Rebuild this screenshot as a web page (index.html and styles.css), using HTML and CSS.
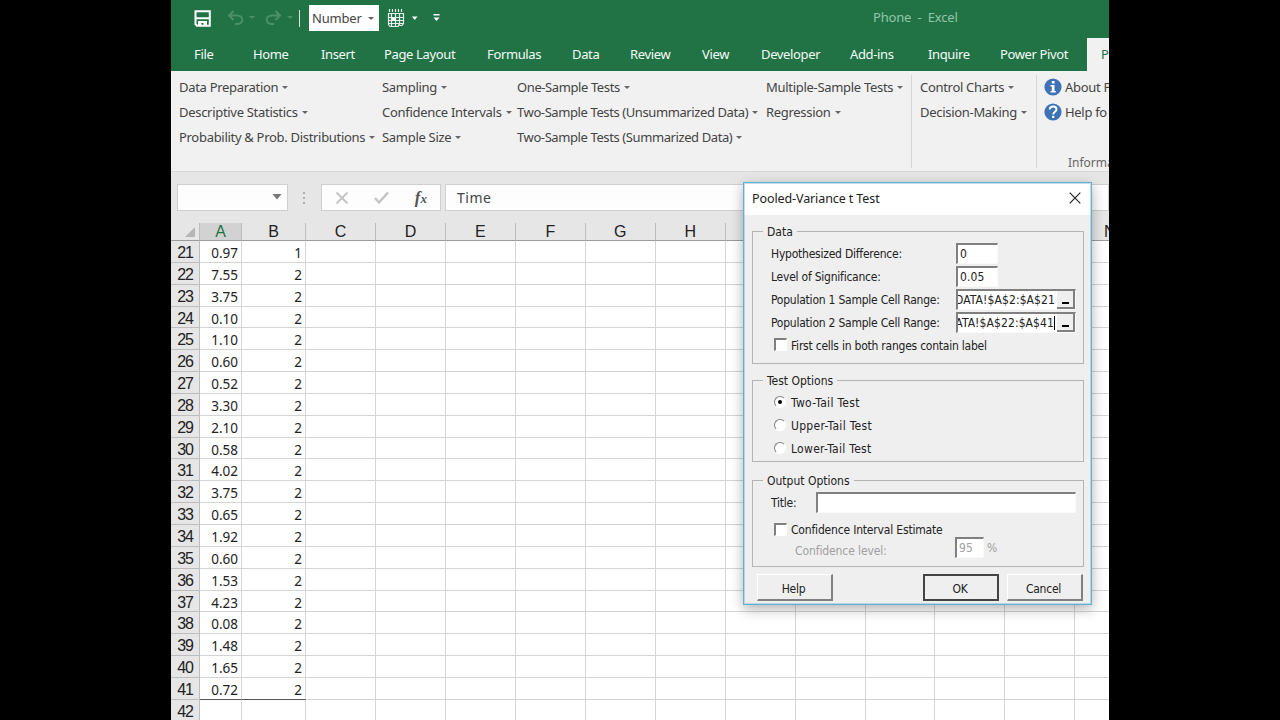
FILE: index.html
```html
<!DOCTYPE html>
<html lang="en">
<head>
    <meta charset="UTF-8">
    <title>Phone - Excel</title>
    <link rel="stylesheet" href="styles.css">
</head>
<body>
    <div class="app">
        <div class="titlebar">
            <svg class="save" width="17" height="17" viewBox="0 0 17 17" fill="none" stroke="#fff" stroke-width="2"><path d="M1.500 1.200h14.300v14.600H3L1.500 14.300zM1.500 8.200h14.300"/><path d="M4 11h9v5H9.500v-3h-2v3H4z" fill="#fff" stroke="none"/></svg>
            <svg class="undo" width="28" height="17" viewBox="0 0 28 17" fill="none" stroke="#4b9068" stroke-width="2"><path d="M6.500 1L2 5.500 6.500 10M2.500 5.500H10c7 0 7 8.500 0 8.500H8"/><path d="M22 6h6l-3 3z" fill="#4b9068" stroke="none"/></svg>
            <svg class="redo" width="28" height="17" viewBox="0 0 28 17" fill="none" stroke="#4b9068" stroke-width="2"><path d="M10.500 1L15 5.500 10.500 10M14.500 5.500H7c-7 0-7 8.500 0 8.500h2"/><path d="M22 6h6l-3 3z" fill="#4b9068" stroke="none"/></svg>
            <span class="bar"></span>
            <div class="number-box"><span>Number</span><i class="arrow"></i></div>
            <svg class="calendar" width="31" height="19" viewBox="0 0 31 19" fill="none" stroke="#e4f0e8" stroke-width="1.200"><path d="M1.500 4.500h15v10l-1.500 2h-2l-1-1-1 2H3l-1.500-2zM1.500 8.500h15M1.500 11.500h15M1.500 14.500h15M4.500 5v12M8.500 5v12M12.500 5v11"/><path d="M2.500 0v3M5.500 0v3M8.500 0v3M11.500 0v3M14.500 0v3"/><path d="M5 9h4v3H5z" fill="#fff" stroke="none"/><path d="M25 7.500h5.500l-2.700 3.500z" fill="#fff" stroke="none"/></svg>
            <svg class="more" width="7" height="8" viewBox="0 0 7 8" fill="#fff"><path d="M.5 0h6v1.500h-6zM.5 3.500h6l-3 3.500z"/></svg>
            <span class="doc-name">Phone&nbsp; -&nbsp; Excel</span>
        </div>
        <div class="tabs">
            <span>File</span><span>Home</span><span>Insert</span><span>Page Layout</span><span>Formulas</span><span>Data</span><span>Review</span><span>View</span><span>Developer</span><span>Add-ins</span><span>Inquire</span><span>Power Pivot</span><span class="active">P</span>
        </div>
        <div class="ribbon">
            <div class="menu"><span>Data Preparation<i class="arrow"></i></span><span>Descriptive Statistics<i class="arrow"></i></span><span>Probability &amp; Prob. Distributions<i class="arrow"></i></span></div>
            <div class="menu"><span>Sampling<i class="arrow"></i></span><span>Confidence Intervals<i class="arrow"></i></span><span>Sample Size<i class="arrow"></i></span></div>
            <div class="menu tight"><span>One-Sample Tests<i class="arrow"></i></span><span>Two-Sample Tests (Unsummarized Data)<i class="arrow"></i></span><span>Two-Sample Tests (Summarized Data)<i class="arrow"></i></span></div>
            <div class="menu"><span>Multiple-Sample Tests<i class="arrow"></i></span><span>Regression<i class="arrow"></i></span></div>
            <div class="menu split"><span>Control Charts<i class="arrow"></i></span><span>Decision-Making<i class="arrow"></i></span></div>
            <div class="menu split info">
                <span><svg width="18" height="18" viewBox="0 0 18 18"><circle cx="9" cy="9" r="8.600" fill="#3d73b5"/><path d="M7.800 3h2.800v2.500H7.800zM6.500 7h4v6h1.300v1.600H6.500V13h1.300V8.600H6.500z" fill="#fff"/></svg>About P</span>
                <span><svg width="18" height="18" viewBox="0 0 18 18"><circle cx="9" cy="9" r="8.600" fill="#3d73b5"/><path d="M5.800 6.500c0-4 6.700-4 6.700 0 0 2.400-3.300 2.200-3.300 5" fill="none" stroke="#fff" stroke-width="2"/><path d="M8.100 12.800h2.200V15H8.100z" fill="#fff"/></svg>Help fo</span>
                <span class="group-name">Informa</span>
            </div>
        </div>
        <div class="formula-bar">
            <div class="name-box"><svg width="10" height="6" viewBox="0 0 10 6"><path d="M.5 0h9L5 5.500z" fill="#777"/></svg></div>
            <div class="dots"><i></i><i></i><i></i></div>
            <div class="fx-box">
                <svg width="14" height="14" viewBox="0 0 14 14" stroke="#c3c3c3" stroke-width="1.800"><path d="M1.500 1.500l11 11M12.500 1.500l-11 11"/></svg>
                <svg width="15" height="13" viewBox="0 0 15 13" fill="none" stroke="#c3c3c3" stroke-width="2.400"><path d="M1 7l4 4.500L14 1.500"/></svg>
                <span class="fx">f<small>x</small></span>
            </div>
            <div class="formula">Time</div>
        </div>
        <div class="sheet" id="sheet"></div>

        <div class="dialog">
            <div class="dialog-title"><span>Pooled-Variance t Test</span>
                <svg width="12" height="12" viewBox="0 0 12 12" stroke="#222" stroke-width="1.200"><path d="M.7.7l10.600 10.600M11.300.7L.7 11.300"/></svg>
            </div>
            <fieldset class="data">
                <legend>Data</legend>
                <div class="row"><label>Hypothesized Difference:</label><div class="field small">0</div></div>
                <div class="row"><label>Level of Significance:</label><div class="field small">0.05</div></div>
                <div class="row"><label>Population 1 Sample Cell Range:</label><div class="field range"><span class="value">DATA!$A$2:$A$21</span><b class="pick"></b></div></div>
                <div class="row"><label>Population 2 Sample Cell Range:</label><div class="field range"><span class="value caret">ATA!$A$22:$A$41</span><b class="pick"></b></div></div>
                <div class="row option"><i class="check"></i>First cells in both ranges contain label</div>
            </fieldset>
            <fieldset class="tests">
                <legend>Test Options</legend>
                <div class="row option"><i class="radio on"></i>Two-Tail Test</div>
                <div class="row option"><i class="radio"></i>Upper-Tail Test</div>
                <div class="row option"><i class="radio"></i>Lower-Tail Test</div>
            </fieldset>
            <fieldset class="output">
                <legend>Output Options</legend>
                <div class="row"><label class="title-label">Title:</label><div class="field wide"></div></div>
                <div class="row option estimate"><i class="check"></i>Confidence Interval Estimate</div>
                <div class="row disabled"><label>Confidence level:</label><div class="field">95</div><span>%</span></div>
            </fieldset>
            <div class="buttons">
                <button>Help</button><button class="ok">OK</button><button>Cancel</button>
            </div>
        </div>
    </div>
    <script src="script.js"></script>
</body>
</html>
```
FILE: styles.css
```css
body {
    margin: 0;
    background: #000;
    font-family: "Noto Sans", "Open Sans", sans-serif;
    font-size: 13px;
    color: #444;
}

.app {
    position: relative;
    width: 938px;
    height: 720px;
    margin-left: 171px;
    overflow: hidden;
    background: #e6e6e6;
    white-space: nowrap;
}

/* Title bar */
.titlebar {
    display: flex;
    align-items: center;
    height: 38px;
    box-sizing: border-box;
    padding: 0 0 2px 23px;
    background: #217346;
}

.undo { margin-left: 16px; }
.redo { margin-left: 10px; }

.bar {
    width: 1px;
    height: 17px;
    margin-left: 6px;
    background: #d5e5db;
}

.number-box {
    display: flex;
    align-items: center;
    justify-content: space-between;
    width: 70px;
    height: 26px;
    box-sizing: border-box;
    padding: 0 5px 0 3px;
    margin-left: 9px;
    background: #fff;
    color: #444;
    letter-spacing: -0.2px;
}

.arrow {
    display: inline-block;
    border: 3px solid transparent;
    border-top-color: #666;
    border-bottom: none;
    margin-left: 4px;
    vertical-align: 3px;
}

.calendar { margin-left: 8px; }
.more { margin-left: 15px; }

.doc-name {
    margin: -2px 0 0 433px;
    color: #93c5a8;
    letter-spacing: -0.2px;
}

/* Tabs */
.tabs {
    display: grid;
    grid-template-columns: 59px 68px 63px 103px 85px 58px 72px 59px 89px 78px 72px 87px 60px;
    height: 33px;
    padding-left: 23px;
    line-height: 32px;
    letter-spacing: -0.36px;
    background: #217346;
    color: #f4faf6;
}

.tabs .active {
    background: #f1f1f1;
    color: #217346;
    padding-left: 14px;
}

/* Ribbon */
.ribbon {
    display: grid;
    grid-template-columns: 203px 135px 249px 146px 125px 200px;
    height: 101px;
    box-sizing: border-box;
    padding: 4px 0 0 8px;
    background: #f1f1f1;
    border-bottom: 1px solid #d8d8d8;
    letter-spacing: -0.3px;
}

.menu {
    display: flex;
    flex-direction: column;
    line-height: 25px;
}

.tight { letter-spacing: -0.4px; }

.split {
    border-left: 1px solid #d6d6d6;
    padding-left: 8px;
    height: 93px;
    margin-left: -1px;
}

.info { padding-left: 7px; }
.info svg { vertical-align: -4px; margin-right: 3px; }

.group-name {
    margin: auto 0 -1px 24px;
    font-size: 12px;
    line-height: 13px;
    color: #666;
    letter-spacing: 0;
}

/* Formula bar */
.formula-bar {
    display: flex;
    height: 27px;
    padding: 12px 0 12px 6px;
}

.name-box,
.fx-box,
.formula {
    box-sizing: border-box;
    background: #fdfdfd;
    border: 1px solid #cfcfcf;
}

.name-box {
    display: flex;
    align-items: center;
    justify-content: flex-end;
    width: 111px;
    padding: 0 5px 1px 0;
}

.dots {
    display: flex;
    flex-direction: column;
    justify-content: center;
    gap: 3px;
    width: 2px;
    margin: 0 16px 0 15px;
}

.dots i {
    height: 2px;
    background: #b0b0b0;
}

.fx-box {
    display: flex;
    align-items: center;
    justify-content: space-between;
    width: 120px;
    padding: 0 13px;
}

.fx {
    font: italic bold 17px "Liberation Serif", serif;
    color: #555;
}

.fx small { font-size: 13px; }

.formula {
    flex: 1;
    margin-left: 4px;
    padding-left: 11px;
    font-size: 14px;
    line-height: 26px;
    letter-spacing: 0.5px;
}

/* Sheet */
.line {
    display: grid;
    grid-template-columns: 29px 42px 64px repeat(12, 69.95px);
    grid-template-rows: 100%;
    height: 21.85px;
    line-height: 23px;
}

.line > * {
    box-sizing: border-box;
    background: #fff;
    border-right: 1px solid #d4d4d4;
    border-bottom: 1px solid #d4d4d4;
    padding: 1px 3px 0 0;
    font-size: 13.5px;
    text-align: right;
    color: #222;
}

.line > .num {
    background: #e6e6e6;
    border-color: #bdbdbd;
    padding: 0 6px 0 0;
    font: 16px/24px "Liberation Sans", Arial, sans-serif;
    letter-spacing: -1px;
}

.line.last > .used { border-bottom-color: #555; }

.line.heads { height: 18px; }

.line.heads > * {
    background: #e6e6e6;
    border-right-color: #bdbdbd;
    border-bottom-color: #9c9c9c;
    padding: 0;
    font: 16px/18px "Liberation Sans", Arial, sans-serif;
    text-align: center;
}

.line.heads > .selected {
    background: #d2d2d2;
    color: #217346;
}

.line.heads > .corner {
    display: flex;
    justify-content: flex-end;
    padding: 4px 4px 0 0;
}

.corner::after {
    content: "";
    width: 0;
    height: 0;
    border-left: 10px solid transparent;
    border-bottom: 10px solid #b5b5b5;
}

/* Dialog */
.dialog {
    position: absolute;
    left: 572px;
    top: 182px;
    width: 349px;
    height: 423px;
    box-sizing: border-box;
    padding: 0 7px 0 8px;
    border: 1px solid #62b1d0;
    outline: 1px solid rgba(98, 177, 208, 0.4);
    outline-offset: -2px;
    background: #efefef;
    box-shadow: 0 4px 12px rgba(0, 0, 0, 0.3);
    font-family: "DejaVu Sans Condensed", "DejaVu Sans", sans-serif;
    font-stretch: condensed;
    font-size: 12px;
    letter-spacing: -0.23px;
    color: #222;
}

.dialog-title {
    display: flex;
    align-items: center;
    justify-content: space-between;
    height: 30px;
    margin: 0 -7px 8px -8px;
    padding: 0 10px 2px 8px;
    background: #fff;
    font: 12.5px "Noto Sans", sans-serif;
    letter-spacing: -0.1px;
}

fieldset {
    box-sizing: border-box;
    margin: 0;
    padding: 2px 6px 0 18px;
    border: 1px solid #b4b4b4;
}

.data { height: 141px; }
.tests { height: 90px; margin-top: 8px; }
.output { height: 95px; margin-top: 10px; }

.tests .row { letter-spacing: 0.3px; }

legend {
    line-height: 16px;
    margin-left: -8px;
    padding: 1px 4px 0;
    margin-top: -1px;
    letter-spacing: 0;
}

.row {
    display: flex;
    align-items: center;
    height: 23px;
}

.row label { width: 185px; }

.field {
    display: flex;
    align-items: center;
    height: 21px;
    box-sizing: border-box;
    padding-left: 2px;
    border: 1px solid #fafafa;
    border-top: 2px solid #808080;
    border-left: 2px solid #808080;
    background: #fff;
    letter-spacing: 0.1px;
}

.small { width: 42px; }

.range {
    width: 120px;
    padding: 0;
    justify-content: space-between;
}

.value {
    display: flex;
    justify-content: flex-end;
    width: 97px;
    overflow: hidden;
}

.caret {
    box-sizing: border-box;
    border-right: 1px solid #000;
}

.pick {
    display: flex;
    align-items: flex-end;
    justify-content: center;
    width: 18px;
    height: 18px;
    box-sizing: border-box;
    border-right: 2px solid #808080;
    border-bottom: 2px solid #808080;
    background: #efefef;
}

.pick::after {
    content: "";
    width: 7px;
    height: 2px;
    margin-bottom: 3px;
    background: #000;
}

.option { padding-left: 3px; }

.check,
.radio {
    width: 12px;
    height: 12px;
    box-sizing: border-box;
    margin-right: 5px;
    border: 1px solid #fff;
    border-top: 2px solid #808080;
    border-left: 2px solid #808080;
    background: #fff;
}

.check { width: 13px; height: 13px; margin: -2px 4px 0 0; }

.radio {
    position: relative;
    top: -1px;
    border-width: 1.5px;
    border-radius: 50%;
}

.on::after {
    content: "";
    display: block;
    width: 4px;
    height: 4px;
    margin: 3px;
    border-radius: 50%;
    background: #000;
}

.title-label.title-label { width: 45px; }
.wide { width: 260px; margin-top: -1px; }

.estimate {
    height: 32px;
    letter-spacing: -0.18px;
}

.disabled {
    margin-top: -5px;
    padding-left: 24px;
    height: 20px;
    color: #a0a0a0;
    letter-spacing: -0.1px;
}

.disabled label { width: 160px; }
.disabled .field { width: 29px; margin: -8px 3px 0 0; }
.disabled span { margin-top: -6px; }

.buttons {
    display: flex;
    padding: 7px 0 0 5px;
}

button {
    width: 76px;
    height: 27px;
    padding: 3px 2px 0 0;
    border: 1px solid #fff;
    border-right: 2px solid #808080;
    border-bottom: 2px solid #808080;
    background: #efefef;
    font: inherit;
    letter-spacing: inherit;
    color: #222;
}

.ok {
    margin: 0 8px 0 90px;
    border: 2px solid #444;
}
```
FILE: script.js
```js
const values = ['0.97', '7.55', '3.75', '0.10', '1.10', '0.60', '0.52', '3.30', '2.10', '0.58', '4.02',
    '3.75', '0.65', '1.92', '0.60', '1.53', '4.23', '0.08', '1.48', '1.65', '0.72', ''];

let html = '<div class="line heads"><span class="corner"></span>';
'ABCDEFGHIJKLMN'.split('').forEach(function(c) {
    html += '<span class="' + (c === 'A' ? 'selected' : '') + '">' + c + '</span>';
});
html += '</div>';

values.forEach(function(v, i) {
    const row = 21 + i;
    const group = v === '' ? '' : (row === 21 ? 1 : 2);
    html += '<div class="line' + (row === 41 ? ' last' : '') + '"><span class="num">' + row + '</span>' +
        '<span class="used">' + v + '</span><span class="used">' + group + '</span>' +
        '<span></span>'.repeat(12) + '</div>';
});

document.getElementById('sheet').innerHTML = html;
```
